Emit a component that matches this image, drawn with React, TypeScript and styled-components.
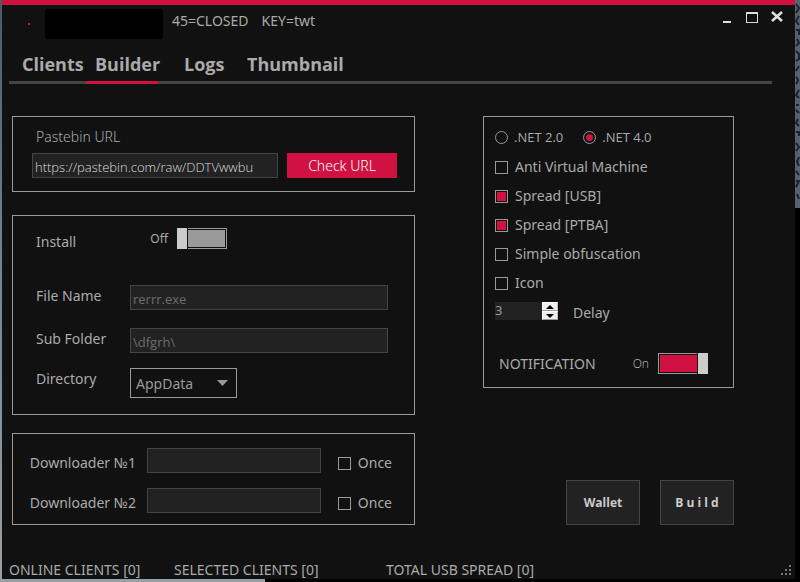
import React from "react";
import styled, { createGlobalStyle, css } from "styled-components";

const accent = "#d11141";
const line = "#999999";
const fieldBg = "#222222";
const fieldLine = "#444444";

const GlobalStyle = createGlobalStyle`
  * { box-sizing: border-box; }
  body { margin: 0; background: #000; }
  body, button, input, select {
    font-family: "Noto Sans", "Open Sans", sans-serif;
  }
`;

const Desktop = styled.div`
  min-height: 100vh;
  display: grid;
  grid-template-columns: 2px minmax(0, 1fr) 5px;
  grid-template-rows: 1fr 3px;
  background: #000;
`;

const LeftEdge = styled.div`
  grid-row: 1 / 3;
  background: linear-gradient(#4d5a66, #76838c 45%, #9a9fa3);
`;

const RightEdge = styled.svg`
  display: block;
  width: 5px;
  height: 208px;
`;

const BottomEdge = styled.div`
  grid-column: 2 / 4;
  background: linear-gradient(100deg, #9a9fa3 33%, #000 33%);
`;

const Window = styled.div`
  display: flex;
  flex-direction: column;
  border-top: 5px solid ${accent};
  background: #111111;
  color: #aaaaaa;
  font-size: 14px;
  line-height: 20px;
`;

const TitleBar = styled.header`
  display: flex;
  align-items: flex-start;
  height: 43px;
  padding: 4px 10px 0 26px;
`;

const StatusDot = styled.span`
  width: 2px;
  height: 2px;
  margin-top: 14px;
  background: #a82445;
`;

const Redaction = styled.span`
  width: 118px;
  height: 30px;
  margin: 0 9px 0 15px;
  border-radius: 3px;
  background: #000;
`;

const Title = styled.h1`
  display: flex;
  gap: 13px;
  margin: 2px auto 0 0;
  font-size: 14px;
  font-weight: 400;
`;

const WindowButtons = styled.div`
  display: flex;
  gap: 9px;
`;

const WindowButton = styled.button`
  width: 16px;
  height: 16px;
  padding: 0;
  border: 0;
  background: none;
  color: #dddddd;
  svg { display: block; }
`;

const Tabs = styled.nav`
  display: flex;
  height: 36px;
  margin: 0 23px 0 7px;
  padding-left: 4px;
  border-bottom: 3px solid ${fieldLine};
`;

const Tab = styled.a<{ $active?: boolean; $width: number }>`
  flex: none;
  width: ${(p) => p.$width}px;
  height: 36px;
  padding: 3px 0 0 9px;
  border-bottom: 3px solid ${(p) => (p.$active ? accent : "transparent")};
  color: #aaaaaa;
  font-family: "Open Sans", "Noto Sans", sans-serif;
  font-size: 18px;
  font-weight: 700;
  line-height: 26px;
  text-decoration: none;
`;

const TabInset = styled.span`
  padding-left: 17px;
`;

const Main = styled.main`
  display: grid;
  grid-template-columns: minmax(0, 403fr) minmax(0, 251fr);
  column-gap: 68px;
  padding: 32px 61px 0 10px;
`;

const RightColumn = styled.div`
  display: flex;
  flex-direction: column;
  justify-content: space-between;
`;

const Panel = styled.section`
  border: 1px solid ${line};
`;

const UrlPanel = styled(Panel)`
  padding: 10px 17px 13px 19px;
`;

const InstallPanel = styled(Panel)`
  margin-top: 23px;
  padding: 12px 26px 16px 23px;
`;

const DownloaderPanel = styled(Panel)`
  display: grid;
  gap: 15px;
  margin-top: 18px;
  padding: 14px 22px 11px 12px;
`;

const OptionsPanel = styled(Panel)`
  padding: 10px 25px 12px 11px;
`;

const UrlLabel = styled.label`
  display: block;
  padding-left: 4px;
  margin-bottom: 6px;
  font-weight: 300;
`;

const UrlRow = styled.div`
  display: flex;
  gap: 9px;
`;

const TextField = styled.input<{ $bright?: boolean }>`
  flex: 1;
  min-width: 0;
  height: 25px;
  padding: 2px 2px 0;
  border: 1px solid ${fieldLine};
  background: ${fieldBg};
  color: ${(p) => (p.$bright ? "#dddddd" : "#6d6d6d")};
  font-family: "Open Sans", "Noto Sans", sans-serif;
  font-size: 13px;
  font-weight: ${(p) => (p.$bright ? 300 : 400)};
  outline: 0;
`;

const CheckButton = styled.button`
  width: 110px;
  height: 25px;
  padding: 0;
  border: 0;
  background: ${accent};
  color: #ffffff;
  font-size: 14px;
  font-weight: 300;
`;

const FormRow = styled.div<{ $top?: number }>`
  display: flex;
  align-items: flex-start;
  margin-top: ${(p) => p.$top ?? 0}px;
`;

const FormLabel = styled.label<{ $tall?: boolean }>`
  width: 94px;
  line-height: ${(p) => (p.$tall ? 28 : 22)}px;
`;

const ToggleText = styled.span<{ $light?: boolean }>`
  width: 47px;
  padding-right: 9px;
  font-size: 12px;
  font-weight: ${(p) => (p.$light ? 300 : 400)};
  line-height: 22px;
  text-align: right;
`;

const Toggle = styled.input`
  appearance: none;
  position: relative;
  width: 50px;
  height: 21px;
  margin: 0;
  padding: 1px;
  border: 1px solid ${line};
  background: ${line} content-box;
  &::before {
    content: "";
    position: absolute;
    top: -1px;
    bottom: -1px;
    left: -1px;
    width: 10px;
    background: #cccccc;
    box-shadow: 1px 0 #111111;
  }
  &:checked { background-color: ${accent}; }
  &:checked::before {
    left: auto;
    right: -1px;
    box-shadow: -1px 0 #111111;
  }
`;

const SelectWrap = styled.div`
  display: grid;
  align-items: center;
  width: 107px;
  > * { grid-area: 1 / 1; }
  svg {
    justify-self: end;
    margin-right: 9px;
    pointer-events: none;
  }
`;

const Select = styled.select`
  appearance: none;
  width: 100%;
  height: 30px;
  padding: 0 5px;
  border: 1px solid ${line};
  border-radius: 0;
  background: #111111;
  color: #999999;
  font-size: 14px;
`;

const DownloadRow = styled.div`
  display: flex;
  align-items: center;
`;

const DownloadLabel = styled.label`
  width: 111px;
  margin-right: 11px;
  padding-top: 5px;
  text-align: right;
  white-space: nowrap;
`;

const choiceBox = css`
  appearance: none;
  flex: none;
  width: 13px;
  height: 13px;
  margin: 0;
  padding: 1px;
  border: 1px solid ${line};
  background-clip: content-box;
  &:checked { background-color: ${accent}; }
`;

const Checkbox = styled.input`
  ${choiceBox}
`;

const Radio = styled.input`
  ${choiceBox}
  padding: 2px;
  border-radius: 50%;
  &:checked {
    background: radial-gradient(circle, ${accent} 3px, transparent 4px);
  }
`;

const Choice = styled.label`
  display: flex;
  align-items: center;
  gap: 7px;
  white-space: nowrap;
`;

const OnceChoice = styled(Choice)`
  margin: 5px 0 0 17px;
`;

const RadioRow = styled.div`
  display: flex;
  gap: 20px;
  margin-bottom: 10px;
  ${Choice} {
    gap: 6px;
    font-family: "Open Sans", "Noto Sans", sans-serif;
    font-size: 13px;
  }
`;

const CheckList = styled.div`
  display: grid;
  justify-items: start;
  gap: 9px;
`;

const DelayRow = styled.div`
  display: flex;
  margin-top: 9px;
  label { line-height: 22px; }
`;

const Spinner = styled.div`
  display: flex;
  width: 63px;
  height: 18px;
  margin-right: 15px;
  background: ${fieldBg};
`;

const SpinnerInput = styled.input`
  appearance: textfield;
  width: 47px;
  height: 16px;
  padding: 0;
  border: 0;
  background: none;
  color: #999999;
  font-size: 13px;
  outline: 0;
  &::-webkit-inner-spin-button { display: none; }
`;

const SpinnerButtons = styled.div`
  display: grid;
  width: 16px;
`;

const SpinnerButton = styled.button`
  display: grid;
  place-items: center;
  padding: 0;
  border: 1px solid #ffffff;
  border-right-color: #bbbbbb;
  border-bottom-color: #999999;
  background: #f0f0f0;
`;

const NotifyRow = styled.div`
  display: flex;
  align-items: flex-start;
  margin-top: 29px;
  padding-left: 4px;
  label { margin-right: auto; line-height: 22px; }
`;

const Actions = styled.div`
  display: flex;
  justify-content: flex-end;
  gap: 20px;
`;

const ActionButton = styled.button`
  width: 74px;
  height: 45px;
  padding: 0;
  border: 1px solid ${fieldLine};
  background: ${fieldBg};
  color: #cccccc;
  font-family: "Open Sans", "Noto Sans", sans-serif;
  font-size: 12px;
  font-weight: 700;
`;

const StatusBar = styled.footer`
  display: flex;
  align-items: flex-end;
  margin-top: auto;
  padding: 0 4px 0 7px;
  line-height: 18px;
  white-space: nowrap;
`;

const StatusItem = styled.span<{ $width: number }>`
  flex: none;
  width: ${(p) => p.$width}px;
`;

const Grip = styled.svg`
  margin: 0 0 4px auto;
`;

const checks = [
  { name: "Anti Virtual Machine", on: false },
  { name: "Spread [USB]", on: true },
  { name: "Spread [PTBA]", on: true },
  { name: "Simple obfuscation", on: false },
  { name: "Icon", on: false },
];

const gripDots = [[8, 0], [4, 4], [8, 4], [0, 8], [4, 8], [8, 8]];

export default function App() {
  return (
    <Desktop>
      <GlobalStyle />
      <LeftEdge />
      <Window>
        <TitleBar>
          <StatusDot />
          <Redaction />
          <Title>
            <span>45=CLOSED</span>
            <span>KEY=twt</span>
          </Title>
          <WindowButtons>
            <WindowButton aria-label="Minimize">
              <svg width="16" height="16"><path d="M4 12h8v2H4z" fill="currentColor" /></svg>
            </WindowButton>
            <WindowButton aria-label="Maximize">
              <svg width="16" height="16">
                <path d="M2 3h12v11H2zM3 5v8h10V5z" fill="currentColor" fillRule="evenodd" />
              </svg>
            </WindowButton>
            <WindowButton aria-label="Close">
              <svg width="16" height="16">
                <path d="M3 3L13 12M13 3L3 12" stroke="currentColor" strokeWidth="2.6" />
              </svg>
            </WindowButton>
          </WindowButtons>
        </TitleBar>

        <Tabs>
          <Tab href="#clients" $width={73}>Clients</Tab>
          <Tab href="#builder" $width={72} $active>Builder</Tab>
          <Tab href="#logs" $width={80}><TabInset>Logs</TabInset></Tab>
          <Tab href="#thumbnail" $width={110}>Thumbnail</Tab>
        </Tabs>

        <Main>
          <div>
            <UrlPanel>
              <UrlLabel htmlFor="url">Pastebin URL</UrlLabel>
              <UrlRow>
                <TextField id="url" $bright defaultValue="https://pastebin.com/raw/DDTVwwbu" />
                <CheckButton>Check URL</CheckButton>
              </UrlRow>
            </UrlPanel>

            <InstallPanel>
              <FormRow>
                <FormLabel htmlFor="install" $tall>Install</FormLabel>
                <ToggleText>Off</ToggleText>
                <Toggle id="install" type="checkbox" role="switch" />
              </FormRow>
              <FormRow $top={29}>
                <FormLabel htmlFor="file">File Name</FormLabel>
                <TextField id="file" defaultValue="rerrr.exe" />
              </FormRow>
              <FormRow $top={18}>
                <FormLabel htmlFor="folder">Sub Folder</FormLabel>
                <TextField id="folder" defaultValue="\dfgrh\" />
              </FormRow>
              <FormRow $top={15}>
                <FormLabel htmlFor="dir">Directory</FormLabel>
                <SelectWrap>
                  <Select id="dir"><option>AppData</option></Select>
                  <svg width="11" height="6"><path d="M0 0h11L5.5 6z" fill={line} /></svg>
                </SelectWrap>
              </FormRow>
            </InstallPanel>

            <DownloaderPanel>
              {[1, 2].map((n) => (
                <DownloadRow key={n}>
                  <DownloadLabel htmlFor={`dl${n}`}>Downloader №{n}</DownloadLabel>
                  <TextField id={`dl${n}`} />
                  <OnceChoice><Checkbox type="checkbox" />Once</OnceChoice>
                </DownloadRow>
              ))}
            </DownloaderPanel>
          </div>

          <RightColumn>
            <OptionsPanel>
              <RadioRow>
                <Choice><Radio type="radio" name="net" />.NET 2.0</Choice>
                <Choice><Radio type="radio" name="net" defaultChecked />.NET 4.0</Choice>
              </RadioRow>
              <CheckList>
                {checks.map((c) => (
                  <Choice key={c.name}>
                    <Checkbox type="checkbox" defaultChecked={c.on} />
                    {c.name}
                  </Choice>
                ))}
              </CheckList>
              <DelayRow>
                <Spinner>
                  <SpinnerInput id="delay" type="number" defaultValue={3} />
                  <SpinnerButtons>
                    <SpinnerButton aria-label="Increase">
                      <svg width="8" height="4"><path d="M0 4L4 0L8 4z" /></svg>
                    </SpinnerButton>
                    <SpinnerButton aria-label="Decrease">
                      <svg width="8" height="4"><path d="M0 0h8L4 4z" /></svg>
                    </SpinnerButton>
                  </SpinnerButtons>
                </Spinner>
                <label htmlFor="delay">Delay</label>
              </DelayRow>
              <NotifyRow>
                <label htmlFor="notify">NOTIFICATION</label>
                <ToggleText $light>On</ToggleText>
                <Toggle id="notify" type="checkbox" role="switch" defaultChecked />
              </NotifyRow>
            </OptionsPanel>
            <Actions>
              <ActionButton>Wallet</ActionButton>
              <ActionButton>B u i l d</ActionButton>
            </Actions>
          </RightColumn>
        </Main>

        <StatusBar>
          <StatusItem $width={165}>ONLINE CLIENTS [0]</StatusItem>
          <StatusItem $width={212}>SELECTED CLIENTS [0]</StatusItem>
          <StatusItem $width={170}>TOTAL USB SPREAD [0]</StatusItem>
          <Grip width="10" height="10">
            {gripDots.map(([x, y]) => (
              <rect key={`${x}-${y}`} x={x} y={y} width="2" height="2" fill="#777777" />
            ))}
          </Grip>
        </StatusBar>
      </Window>
      <RightEdge viewBox="0 0 5 208" preserveAspectRatio="none">
        <rect width="5" height="208" fill="#55616c" />
        <path
          d="M1 4l3 4l-3 5M4 16l-3 5l3 4M1 30h3v5M2 39l2 4l-3 3M1 51l3 3v5l-3 2M4 66l-3 5M1 77q4 3 0 7M4 90l-3 5l3 3M1 105h3M1 110l3 3M3 119l-2 4l3 3M1 132h3v4M1 143l3 4l-3 4M4 157l-2 5l2 4M1 171l3 4M1 181h3l-3 6M2 194l2 5"
          stroke="#17232d"
          strokeWidth="2"
          fill="none"
        />
      </RightEdge>
      <BottomEdge />
    </Desktop>
  );
}
